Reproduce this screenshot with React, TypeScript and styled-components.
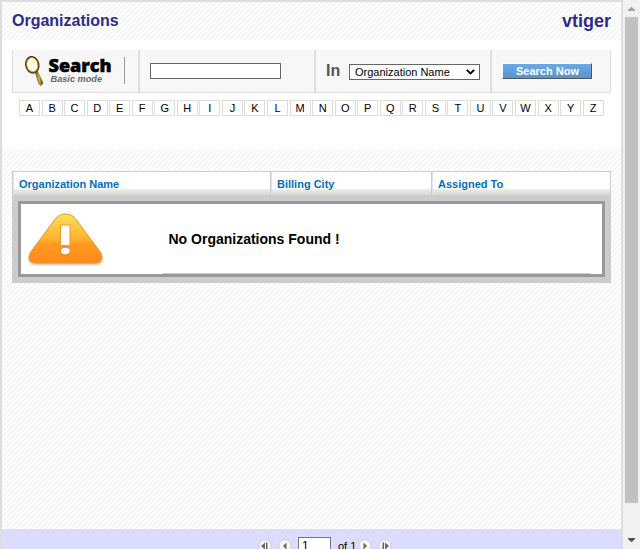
import React from "react";
import styled, { createGlobalStyle } from "styled-components";

const Global = createGlobalStyle`
  * { box-sizing: border-box; }
  html, body { margin: 0; padding: 0; height: 549px; overflow: hidden; background: #fff; }
  body { font-family: Arial, "Liberation Sans", sans-serif; font-size: 11px; color: #000; }
`;

const hatch = `url("data:image/svg+xml,%3Csvg xmlns='http://www.w3.org/2000/svg' width='5' height='5' shape-rendering='crispEdges'%3E%3Cpath fill='%23ebebeb' d='M4 0h1v1h-1zM3 1h1v1h-1zM2 2h1v1h-1zM1 3h1v1h-1zM0 4h1v1h-1z'/%3E%3C/svg%3E")`;

const Window = styled.div`
  display: flex;
  width: 640px;
  height: 549px;
  overflow: hidden;
`;

const Page = styled.main`
  width: 623px;
  height: 549px;
  display: flex;
  flex-direction: column;
  border: 2px solid #ddd;
  border-bottom: 0;
  background: #fff ${hatch};
  overflow: hidden;
`;

const Header = styled.header`
  height: 38px;
  flex: none;
  display: flex;
  justify-content: space-between;
  padding: 9px 10px 0;
  color: #2c2c8c;
  font-weight: bold;
  font-size: 16px;
  line-height: 20px;
`;

const Brand = styled.span`
  font-size: 18px;
  line-height: 21px;
`;

const SearchArea = styled.section`
  height: 109px;
  flex: none;
  background: #fff;
  padding: 10px 10px 0;
`;

const SearchBar = styled.form`
  width: 599px;
  height: 43px;
  display: flex;
  background: #f7f7f7;
  border: 1px solid #ddd;
  border-top: 0;
`;

const SearchCell = styled.div<{ $w: number; $last?: boolean }>`
  width: ${(p) => p.$w}px;
  flex: none;
  display: flex;
  align-items: center;
  border-right: ${(p) => (p.$last ? 0 : 2)}px solid #ddd;
`;

const SearchLogo = styled.svg`
  display: block;
`;

const TextField = styled.input`
  width: 131px;
  height: 16px;
  margin-left: 10px;
  padding: 0;
  border: 1px solid #666;
  background: #fff;
`;

const InLabel = styled.b`
  margin: 0 9px 0 10px;
  color: #555;
  font-size: 16px;
  width: 14px;
`;

const Picker = styled.div`
  width: 131px;
  height: 16px;
  margin-top: 1px;
  padding: 0 4px 0 5px;
  display: flex;
  align-items: center;
  justify-content: space-between;
  border: 1px solid #666;
  background: #fff;
  white-space: nowrap;
  font-size: 11px;
`;

const SearchButton = styled.button`
  width: 90px;
  height: 16px;
  margin-left: 10px;
  padding: 1px 0 0 1px;
  border: 1px solid;
  border-color: #fff #555 #555 #fff;
  background: linear-gradient(#6ba8e6, #5a94cc);
  color: #fff;
  font: bold 11px/13px Arial, "Liberation Sans", sans-serif;
`;

const Alphabet = styled.nav`
  display: flex;
  width: 585px;
  margin: 7px 0 0 7px;
  justify-content: space-between;
`;

const Letter = styled.span`
  width: 21px;
  height: 16px;
  border: 1px solid #ddd;
  text-align: center;
  line-height: 14px;
`;

const List = styled.section`
  width: 599px;
  height: 112px;
  flex: none;
  margin: 22px 0 0 10px;
  background: #ccc;
`;

const ListHead = styled.div`
  height: 24px;
  display: flex;
  gap: 1px;
  padding: 1px 1px 0;
`;

const HeadCell = styled.div<{ $w: number }>`
  width: ${(p) => p.$w}px;
  height: 23px;
  flex: none;
  padding-left: 5px;
  border-left: 1px solid #e2e2e2;
  background: linear-gradient(#fff 0 17px, #efefeb 17px, #d6d6d1 23px);
  color: #0070ba;
  font-weight: bold;
  line-height: 24px;
`;

const EmptyBox = styled.div`
  width: 587px;
  height: 76px;
  margin: 6px 0 0 6px;
  border: 3px solid #999;
  background: #fff;
  display: flex;
`;

const WarningIcon = styled.svg`
  flex: none;
  margin: 7px 0 0 5px;
`;

const EmptyMessage = styled.div`
  width: 428px;
  height: 70px;
  margin-left: 57px;
  padding-left: 5.5px;
  border-bottom: 1px solid #ccc;
  font-size: 14px;
  font-weight: bold;
  line-height: 70px;
`;

const Pager = styled.footer`
  height: 20px;
  flex: none;
  margin-top: auto;
  padding: 8px 0 0 256px;
  display: flex;
  background: #dcdcff;
  overflow: hidden;
`;

const PageButton = styled.svg<{ $gap: number }>`
  flex: none;
  margin: 2px ${(p) => p.$gap}px 0 0;
`;

const PageField = styled.div`
  width: 33px;
  height: 21px;
  flex: none;
  padding: 1px 0 0 3px;
  border: 1px solid #767676;
  background: #fff;
  font-size: 12px;
  line-height: 14px;
`;

const PageCount = styled.span`
  width: 20px;
  margin: 3px 0 0 7px;
  line-height: 13px;
  white-space: nowrap;
`;

const Scrollbar = styled.aside`
  width: 17px;
  height: 549px;
  display: flex;
  flex-direction: column;
  justify-content: space-between;
  background: #f1f1f1;
`;

const Thumb = styled.div`
  width: 13px;
  height: 486px;
  margin-left: 2px;
  background: #c1c1c1;
`;

const ScrollArrow = styled.svg`
  display: block;
`;

const letters = "ABCDEFGHIJKLMNOPQRSTUVWXYZ".split("");

function PagerIcon({ back, end, gap }: { back?: boolean; end?: boolean; gap: number }) {
  return (
    <PageButton $gap={gap} width="14" height="14" viewBox="0 0 14 14">
      <circle cx="7" cy="7" r="6.6" fill="#dedee2" stroke="#cfcfdf" strokeWidth=".6" />
      <circle cx="7" cy="6.5" r="5.3" fill="#f7f7f7" />
      <g fill="#666" transform={back ? undefined : "translate(14 0) scale(-1 1)"}>
        <path d={end ? "M7 3.5v7L3 7z" : "M8.5 3.5v7L5 7z"} />
        {end && <path d="M8 3.5h1.500v7H8z" />}
      </g>
    </PageButton>
  );
}

export default function App() {
  return (
    <Window>
      <Global />
      <Page>
        <Header>
          <span>Organizations</span>
          <Brand>vtiger</Brand>
        </Header>
        <SearchArea>
          <SearchBar>
            <SearchCell $w={127}>
              <SearchLogo width="125" height="42" viewBox="13 50 125 42">
                <defs>
                  <linearGradient id="handle" x1="0" x2="1" y1="0" y2="0">
                    <stop offset="0" stopColor="#5b4308" />
                    <stop offset=".5" stopColor="#dfb83e" />
                    <stop offset="1" stopColor="#4c3605" />
                  </linearGradient>
                </defs>
                <path d="M35 71.5l2-1 6 12.5-2 2.5-2-1.5z" fill="url(#handle)" stroke="#65490b" strokeWidth=".6" />
                <ellipse cx="32.3" cy="64.8" rx="6.3" ry="8" transform="rotate(-12 32.3 64.8)" fill="#fffce6" stroke="#46340a" strokeWidth="1.8" />
                <ellipse cx="32.3" cy="64.8" rx="5.6" ry="7.3" transform="rotate(-12 32.3 64.8)" fill="none" stroke="#c89a29" strokeWidth=".8" />
                <text x="48.5" y="71.5" fontFamily="Open Sans, sans-serif" fontWeight="800" fontSize="17.5" textLength="63" lengthAdjust="spacingAndGlyphs" stroke="#000" strokeWidth=".5">Search</text>
                <text x="50.5" y="82" fontFamily="Liberation Sans, sans-serif" fontWeight="bold" fontStyle="italic" fontSize="9.5" fill="#666" textLength="51.5" lengthAdjust="spacingAndGlyphs">Basic mode</text>
                <path d="M124.5 57v27" stroke="#999" />
              </SearchLogo>
            </SearchCell>
            <SearchCell $w={176}>
              <TextField aria-label="Search" />
            </SearchCell>
            <SearchCell $w={176}>
              <InLabel>In</InLabel>
              <Picker>
                <span>Organization Name</span>
                <svg width="9" height="6" viewBox="0 0 9 6">
                  <path d="M.8.8l3.7 3.7L8.2.8" fill="none" stroke="#000" strokeWidth="1.9" />
                </svg>
              </Picker>
            </SearchCell>
            <SearchCell $w={118} $last>
              <SearchButton type="button">Search Now</SearchButton>
            </SearchCell>
          </SearchBar>
          <Alphabet>
            {letters.map((l) => (
              <Letter key={l}>{l}</Letter>
            ))}
          </Alphabet>
        </SearchArea>
        <List>
          <ListHead>
            <HeadCell $w={257}>Organization Name</HeadCell>
            <HeadCell $w={160}>Billing City</HeadCell>
            <HeadCell $w={178}>Assigned To</HeadCell>
          </ListHead>
          <EmptyBox>
            <WarningIcon width="80" height="56" viewBox="0 0 80 56">
              <defs>
                <linearGradient id="amber" x1="0" x2="0" y1="0" y2="1">
                  <stop offset="0" stopColor="#ffdf5c" />
                  <stop offset=".5" stopColor="#ffb42e" />
                  <stop offset=".62" stopColor="#ff9a20" />
                  <stop offset="1" stopColor="#ff8a1a" />
                </linearGradient>
                <filter id="soft">
                  <feGaussianBlur stdDeviation="1.2" />
                </filter>
              </defs>
              <path d="M39 5c5 0 8 2 11 6l24 31c5 7 2 12-5 12H10c-7 0-10-5-5-12L28 11c3-4 6-6 11-6z" fill="#cdbd9c" filter="url(#soft)" />
              <path d="M39.5 3c5 0 8 2 11 6l23 31c5 7 2 12-5 12H10.5c-7 0-10-5-5-12L28.5 9c3-4 6-6 11-6z" fill="url(#amber)" stroke="#e99a24" />
              <rect x="34.5" y="14" width="9.5" height="20.5" rx="1" fill="#fff" stroke="#e59b25" />
              <ellipse cx="39.3" cy="40" rx="5" ry="3.9" fill="#fff" stroke="#e27a15" />
            </WarningIcon>
            <EmptyMessage>No Organizations Found !</EmptyMessage>
          </EmptyBox>
        </List>
        <Pager>
          <PagerIcon back end gap={6} />
          <PagerIcon back gap={6} />
          <PageField>1</PageField>
          <PageCount>of 1</PageCount>
          <PagerIcon gap={6} />
          <PagerIcon end gap={0} />
        </Pager>
      </Page>
      <Scrollbar>
        <ScrollArrow width="17" height="17" viewBox="0 0 17 17">
          <path d="M5 11h7v-1L8.5 6.8 5 10z" fill="#a3a3a3" />
        </ScrollArrow>
        <Thumb />
        <ScrollArrow width="17" height="46" viewBox="0 0 17 46">
          <path d="M5 35h7v1l-3.5 3.2L5 36z" fill="#505050" />
        </ScrollArrow>
      </Scrollbar>
    </Window>
  );
}
